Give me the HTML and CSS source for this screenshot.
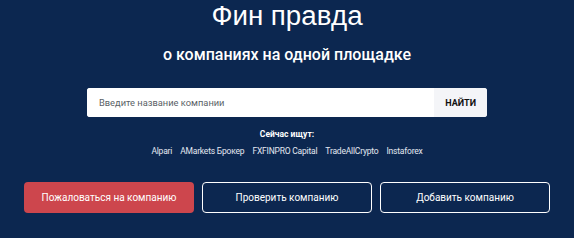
FILE: index.html
```html
<!DOCTYPE html>
<html lang="ru">
<head>
<meta charset="utf-8">
<title>Фин правда</title>
<link rel="stylesheet" href="styles.css">
</head>
<body>
<main class="hero">
  <h1 class="title">Фин правда</h1>
  <p class="subtitle">о компаниях на одной площадке</p>
  <form class="search">
    <input class="search-input" type="text" placeholder="Введите название компании">
    <button class="search-btn" type="button">НАЙТИ</button>
  </form>
  <p class="now-label">Сейчас ищут:</p>
  <div class="now-links">
    <a class="now-link">Alpari</a>
    <a class="now-link">AMarkets Брокер</a>
    <a class="now-link">FXFINPRO Capital</a>
    <a class="now-link">TradeAllCrypto</a>
    <a class="now-link">Instaforex</a>
  </div>
  <div class="actions">
    <a class="btn btn-red">Пожаловаться на компанию</a>
    <a class="btn btn-outline">Проверить компанию</a>
    <a class="btn btn-outline">Добавить компанию</a>
  </div>
</main>
</body>
</html>
```
FILE: styles.css
```css
html, body {
  margin: 0;
  padding: 0;
  background: #0c2750;
  height: 100%;
}
body {
  font-family: Roboto, "Liberation Sans", Arial, sans-serif;
  color: #fff;
}
.hero {
  display: flex;
  flex-direction: column;
  align-items: center;
}
.title {
  margin: 0;
  font-family: "Liberation Sans", Arial, sans-serif;
  font-size: 27.7px;
  line-height: 32px;
  font-weight: 400;
}
.subtitle {
  margin: 13px 0 0;
  font-size: 16px;
  line-height: 20px;
  font-weight: 500;
}
.search {
  margin-top: 23px;
  display: flex;
  width: 400px;
  height: 29px;
  background: #fff;
  border-radius: 3px;
  overflow: hidden;
}
.search-input {
  flex: 1;
  border: 0;
  outline: 0;
  padding: 0 12px;
  font-family: Roboto, "Liberation Sans", Arial, sans-serif;
  font-size: 9.3px;
  color: #333;
  background: #fff;
}
.search-input::placeholder {
  color: #5a5f66;
}
.search-btn {
  border: 0;
  background: #f4f5f8;
  padding: 0 11px;
  font-family: Roboto, "Liberation Sans", Arial, sans-serif;
  font-weight: 700;
  font-size: 9px;
  color: #111;
}
.now-label {
  margin: 12px 0 0;
  font-size: 8.5px;
  line-height: 10px;
  font-weight: 700;
}
.now-links {
  margin-top: 6px;
  display: flex;
  gap: 8px;
}
.now-link {
  font-size: 8.5px;
  line-height: 12px;
  letter-spacing: -0.2px;
  color: #e4e8f0;
}
.actions {
  margin-top: 25px;
  display: flex;
  gap: 8px;
}
.btn {
  box-sizing: border-box;
  width: 170px;
  height: 31px;
  display: flex;
  align-items: center;
  justify-content: center;
  border-radius: 4px;
  font-size: 10px;
  color: #fff;
}
.btn-red {
  background: #cd464d;
}
.btn-outline {
  border: 1.5px solid #fff;
}
```
